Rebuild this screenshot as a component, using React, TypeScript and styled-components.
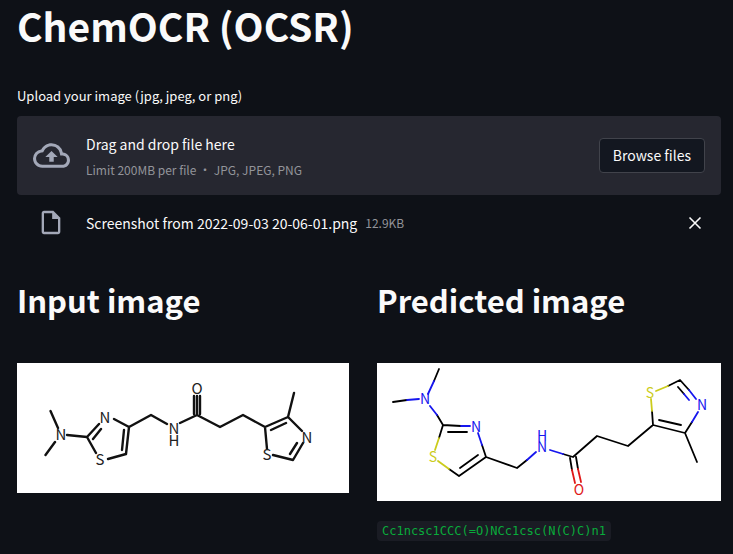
import React from "react";
import styled, { createGlobalStyle } from "styled-components";

const sans = `"Noto Sans CJK SC", "Noto Sans", sans-serif`;

const GlobalStyle = createGlobalStyle`
  *, *::before, *::after { box-sizing: border-box; }
  body { margin: 0; background: #0e1117; color: #fafafa; font-family: ${sans}; font-size: 14px; line-height: 24px; }
`;

const Page = styled.main`
  padding: 0 12px 12px 17px;
`;

const Title = styled.h1`
  margin: 0;
  padding: 0 0 35px;
  font-size: 39px;
  line-height: 50px;
  font-weight: 700;
`;

const Label = styled.label`
  display: block;
  padding-bottom: 9px;
  font-size: 13px;
  line-height: 22px;
`;

const Dropzone = styled.section`
  display: flex;
  align-items: center;
  gap: 16px;
  padding: 16px;
  border-radius: 4px;
  background: #262730;
`;

const DropText = styled.div`
  flex: 1;
  display: flex;
  flex-direction: column;
  gap: 4px;
`;

const Small = styled.small`
  font-size: 12px;
  line-height: 19px;
  color: #93949a;
`;

const BrowseButton = styled.button`
  padding: 4px 13px;
  border: 1px solid #41434b;
  border-radius: 4px;
  background: #131720;
  color: inherit;
  font: inherit;
  line-height: 25px;
`;

const HiddenInput = styled.input`
  display: none;
`;

const FileRow = styled.div`
  display: flex;
  align-items: center;
  gap: 8px;
  padding: 13px 16px 0 20px;
`;

const FileIconBox = styled.span`
  display: flex;
  width: 28px;
  margin-right: 13px;
  color: #a3a8b8;
`;

const RemoveButton = styled.button`
  display: flex;
  margin-left: auto;
  padding: 0;
  border: 0;
  background: none;
  color: inherit;
`;

const Columns = styled.div`
  display: grid;
  grid-template-columns: 1fr 1fr;
  gap: 16px;
  padding-top: 36px;
`;

const Heading = styled.h2`
  margin: 0;
  padding-bottom: 36px;
  font-size: 31px;
  line-height: 54px;
  font-weight: 700;
`;

const Picture = styled.svg<{ $inset?: boolean }>`
  display: block;
  width: ${(p) => (p.$inset ? "calc(100% - 12px)" : "100%")};
  height: auto;
  background: #fff;
  fill: none;
  stroke: ${(p) => (p.$inset ? "#111" : "#000")};
  stroke-width: ${(p) => (p.$inset ? 2.4 : 1.8)};
  stroke-linecap: round;
  stroke-linejoin: round;
`;

const Atom = styled.text<{ $color?: string; $size?: number }>`
  fill: ${(p) => p.$color ?? "#222"};
  stroke: none;
  font-family: ${sans};
  font-size: ${(p) => p.$size ?? 14}px;
  text-anchor: middle;
`;

const Code = styled.code`
  display: inline-block;
  margin-top: 20px;
  padding: 0 5px;
  border-radius: 4px;
  background: #1a1c24;
  color: #09ab3b;
  font-family: "DejaVu Sans Mono", monospace;
  font-size: 12px;
  line-height: 20px;
`;

const BLUE = "#1616ee";
const YELLOW = "#cccc1c";
const RED = "#e01818";

function CloudIcon() {
  return (
    <svg width="37" height="37" viewBox="0 0 24 24" fill="#a3a8b8" aria-hidden="true">
      <path d="M19.35 10.04A7.49 7.49 0 0 0 12 4C9.11 4 6.6 5.64 5.35 8.04A5.994 5.994 0 0 0 0 14c0 3.31 2.69 6 6 6h13c2.76 0 5-2.24 5-5 0-2.64-2.05-4.78-4.65-4.96zM19 18H6c-2.21 0-4-1.79-4-4 0-2.05 1.53-3.76 3.56-3.97l1.07-.11.5-.95A5.469 5.469 0 0 1 12 6c2.62 0 4.88 1.86 5.39 4.43l.3 1.5 1.53.11A2.98 2.98 0 0 1 22 15c0 1.65-1.35 3-3 3zM8 13h2.55v3h2.9v-3H16l-4-4z" />
    </svg>
  );
}

function FileIcon() {
  return (
    <svg width="29" height="29" viewBox="0 0 24 24" fill="currentColor" aria-hidden="true">
      <path d="M14 2H6c-1.1 0-1.99.9-1.99 2L4 20c0 1.1.89 2 1.99 2H18c1.1 0 2-.9 2-2V8l-6-6zM6 20V4h7v5h5v11H6z" />
    </svg>
  );
}

function InputMolecule() {
  return (
    <Picture $inset viewBox="0 0 332 130" role="img" aria-label="Input molecule">
      <path d="M33.500 48L41 65M28.500 92L38 79M50 72L70 74L82 61M97 56L112 64L109 91L91 96M79 90L70 74M76 76L84 66M107 67L105 87M112 64L134 52L150 61M163 60L180 52L203 64L226 52L248 64L271 54L285 68M250 86L248 64M254 67L269 60M271 54L277 30M256 92L276 97L286 80M273 91L280 80M177 51V33M180 52V33M183 51V33" />
      <Atom $size={15} x="44" y="77">N</Atom>
      <Atom $size={15} x="88" y="60">N</Atom>
      <Atom $size={15} x="83" y="102">S</Atom>
      <Atom $size={15} x="157" y="71">N</Atom>
      <Atom $size={15} x="157" y="83">H</Atom>
      <Atom $size={15} x="180" y="31">O</Atom>
      <Atom $size={15} x="290" y="80">N</Atom>
      <Atom $size={15} x="250" y="97">S</Atom>
    </Picture>
  );
}

function PredictedMolecule() {
  return (
    <Picture viewBox="0 0 344 138" role="img" aria-label="Predicted molecule">
      <path d="M62 6L57 18M16 39L30 37M60 52L66 62L84 63M71 69H90M66 62L62 75M72 106L82 113L109 94L105 82M83 105L101 92M109 94L140 105L150 97M186 91L196 94L220 73L251 83L276 62L308 70L315 59M282 57L304 62M308 70L320 99M276 62L275 48M291 23L303 17L312 27M301 24L307 31M193 95L195 107M199 94L201 106" />
      <path stroke={BLUE} d="M57 18L51 31M30 37L42 36M53 43L60 52M84 63L93 63M105 82L101 70M150 97L159 89M173 87L186 91M315 59L321 49M312 27L319 36M307 31L312 37" />
      <path stroke={YELLOW} d="M62 75L58 87M61 98L72 106M275 48L274 36M279 28L291 23" />
      <path stroke={RED} d="M195 107L198 120M201 106L204 119" />
      <Atom $color={BLUE} x="48" y="41">N</Atom>
      <Atom $color={BLUE} x="99" y="69">N</Atom>
      <Atom $color={YELLOW} x="56" y="99">S</Atom>
      <Atom $color={BLUE} x="165" y="78">H</Atom>
      <Atom $color={BLUE} x="165" y="89">N</Atom>
      <Atom $color={RED} x="202" y="132">O</Atom>
      <Atom $color={YELLOW} x="273" y="35">S</Atom>
      <Atom $color={BLUE} x="325" y="47">N</Atom>
    </Picture>
  );
}

export default function App() {
  const input = React.useRef<HTMLInputElement>(null);
  return (
    <Page>
      <GlobalStyle />
      <Title>ChemOCR (OCSR)</Title>
      <Label htmlFor="upload">Upload your image (jpg, jpeg, or png)</Label>
      <Dropzone>
        <CloudIcon />
        <DropText>
          <span>Drag and drop file here</span>
          <Small>Limit 200MB per file • JPG, JPEG, PNG</Small>
        </DropText>
        <HiddenInput ref={input} id="upload" type="file" accept=".jpg,.jpeg,.png" />
        <BrowseButton type="button" onClick={() => input.current?.click()}>Browse files</BrowseButton>
      </Dropzone>
      <FileRow>
        <FileIconBox><FileIcon /></FileIconBox>
        <span>Screenshot from 2022-09-03 20-06-01.png</span>
        <Small>12.9KB</Small>
        <RemoveButton type="button" aria-label="Remove file">
          <svg width="20" height="20" viewBox="0 0 20 20" fill="none" stroke="currentColor" strokeWidth="1.6">
            <path d="M4.500 4.500L15.500 15.500M15.500 4.500L4.500 15.500" />
          </svg>
        </RemoveButton>
      </FileRow>
      <Columns>
        <section>
          <Heading>Input image</Heading>
          <InputMolecule />
        </section>
        <section>
          <Heading>Predicted image</Heading>
          <PredictedMolecule />
          <Code>Cc1ncsc1CCC(=O)NCc1csc(N(C)C)n1</Code>
        </section>
      </Columns>
    </Page>
  );
}
